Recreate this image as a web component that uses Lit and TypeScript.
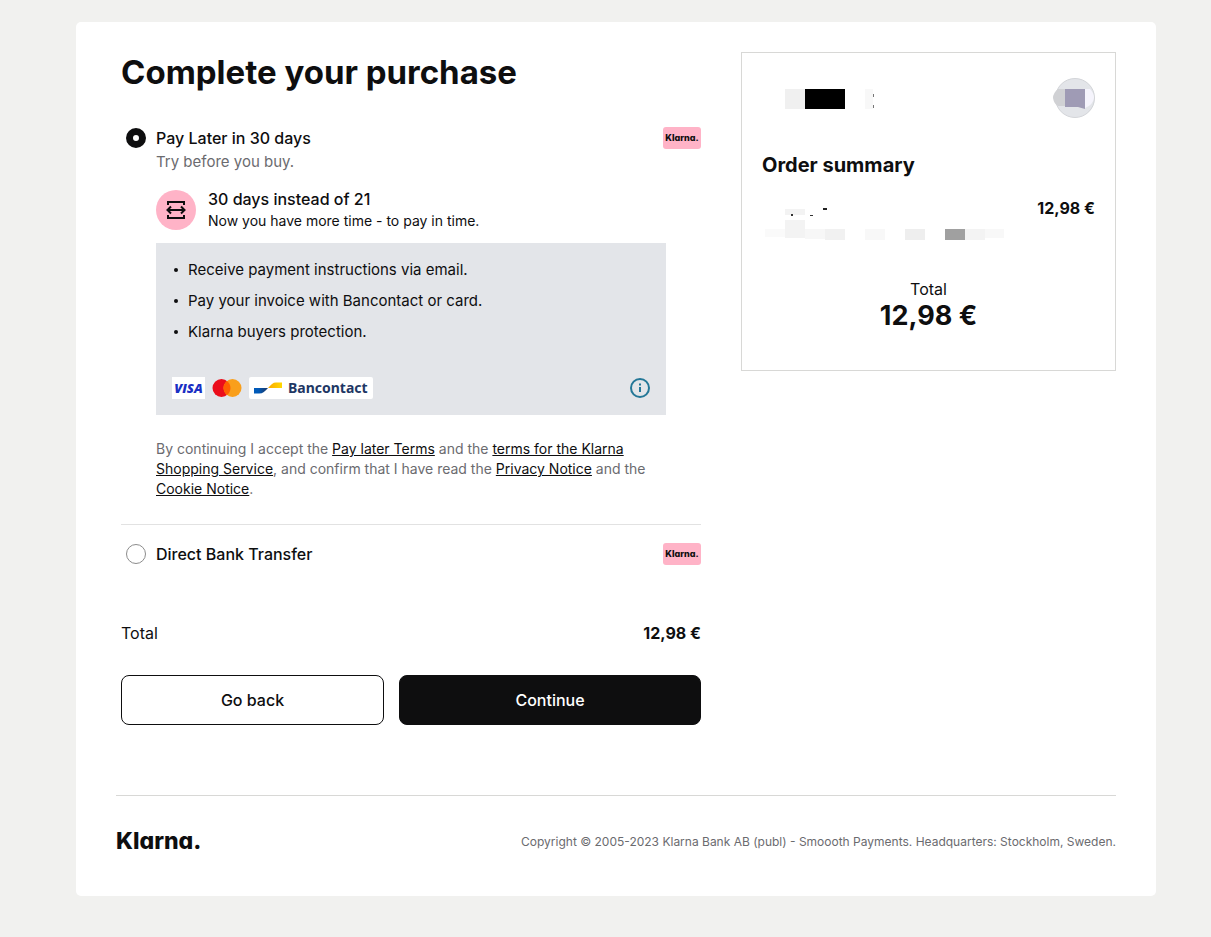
import { LitElement, html, css, svg } from "lit";
import { customElement, property, state } from "lit/decorators.js";

@customElement("klarna-badge")
class KlarnaBadge extends LitElement {
  static styles = css`
    :host {
      display: flex;
      align-items: center;
      justify-content: center;
      width: 38px;
      height: 22px;
      border-radius: 3px;
      background: #ffb3c7;
      color: #0e0e0f;
      font: 800 9px/22px Inter, sans-serif;
      font-feature-settings: "cv11";
    }
  `;
  render() {
    return html`Klarna.`;
  }
}

@customElement("pay-option")
class PayOption extends LitElement {
  @property() label = "";
  @property() value = "";
  @property({ type: Boolean }) selected = false;

  static styles = css`
    :host {
      display: block;
    }
    .row {
      display: flex;
      align-items: center;
      height: 24px;
      padding-left: 5px;
    }
    .radio {
      appearance: none;
      box-sizing: border-box;
      width: 20px;
      height: 20px;
      margin: 0 10px 0 0;
      border: 1px solid #8c8c8c;
      border-radius: 50%;
      background: #fff;
    }
    .radio:checked {
      border: 7px solid #0e0e0f;
    }
    .label {
      flex: 1;
      font-weight: 500;
    }
    .body {
      padding-left: 35px;
    }
  `;

  private pick() {
    this.dispatchEvent(new CustomEvent("pick", { detail: this.value }));
  }

  render() {
    return html`
      <div class="row">
        <input class="radio" type="radio" id="option" name="method" .checked=${this.selected} @change=${this.pick} />
        <label class="label" for="option">${this.label}</label>
        <klarna-badge></klarna-badge>
      </div>
      <div class="body"><slot></slot></div>
    `;
  }
}

const extendIcon = html`
  <svg width="40" height="40" viewBox="0 0 40 40" fill="none" stroke="#0e0e0f" stroke-width="2" aria-hidden="true">
    <path d="M12 15V12H28V15M12 25V28H28V25M11.5 20H28.5M15 16.5L11.5 20L15 23.5M25 16.5L28.5 20L25 23.5" />
  </svg>
`;

const infoIcon = html`
  <svg width="20" height="20" viewBox="0 0 20 20" aria-hidden="true">
    <circle cx="10" cy="10" r="9" fill="none" stroke="#247797" stroke-width="2" />
    <path d="M9 5.5H11V7.5H9ZM9 9H11V14H9Z" fill="#247797" />
  </svg>
`;

const mastercard = html`
  <svg width="30" height="22" viewBox="0 0 30 22" role="img" aria-label="Mastercard">
    <circle cx="9.5" cy="11" r="9" fill="#eb0d1b" />
    <circle cx="20.5" cy="11" r="9" fill="#f99f1b" />
    <path d="M15 3.9a9 9 0 0 1 0 14.2a9 9 0 0 1 0-14.2Z" fill="#ff5f00" />
  </svg>
`;

const bancontactMark = html`
  <svg width="28" height="12" viewBox="0 0 28 12" aria-hidden="true">
    <defs>
      <linearGradient id="blue"><stop offset="0.3" stop-color="#005ab9" /><stop offset="1" stop-color="#1e3764" /></linearGradient>
      <linearGradient id="gold"><stop offset="0" stop-color="#fba900" /><stop offset="1" stop-color="#ffd800" /></linearGradient>
    </defs>
    <path d="M0 6H14C11 9.5 9 11.5 5 11.5H0Z" fill="url(#blue)" />
    <path d="M14 6C17 2.5 19 .5 22 .5H28V6Z" fill="url(#gold)" />
  </svg>
`;

const tiles = (list: [number, number, number, number, string][]) =>
  list.map(([x, y, w, h, fill]) => svg`<rect x=${x} y=${y} width=${w} height=${h} fill=${fill} />`);

const storeName = html`
  <svg width="130" height="40" viewBox="0 0 130 40" aria-hidden="true">
    ${tiles([
      [23, 11, 20, 20, "#f0f0f0"],
      [43, 11, 40, 20, "#000"],
      [103, 11, 8, 20, "#f8f8f8"],
      [111, 16, 1, 3, "#777"],
      [111, 27, 1, 3, "#777"],
    ])}
  </svg>
`;

const storeLogo = html`
  <svg width="42" height="40" viewBox="0 0 42 40" aria-hidden="true">
    <circle cx="22" cy="20" r="19.5" fill="#e3e5e9" stroke="#d2d4d8" />
    <path d="M12 11H5Q0 15 0 20Q1 26 5 28H12Z" fill="#d0d1d4" />
    <path d="M12 11H32V31L25 29H12Z" fill="#9f9bb5" />
    <path d="M32 11H37Q41 15 41 20Q40 27 32 30Z" fill="#f5f4fc" />
  </svg>
`;

const itemName = html`
  <svg width="244" height="46" viewBox="0 0 244 46" aria-hidden="true">
    ${tiles([
      [23, 13, 20, 6, "#f3f3f3"],
      [29, 18, 2, 2, "#333"],
      [48, 19, 3, 1, "#333"],
      [61, 12, 4, 2, "#222"],
      [23, 24, 20, 18, "#f3f3f3"],
      [3, 33, 20, 8, "#fafafa"],
      [43, 33, 20, 10, "#f7f7f7"],
      [63, 33, 20, 11, "#f1f1f1"],
      [103, 33, 20, 11, "#f8f8f8"],
      [143, 33, 20, 11, "#eee"],
      [183, 33, 20, 11, "#a0a0a0"],
      [203, 33, 20, 11, "#f3f3f3"],
      [223, 33, 19, 9, "#f8f8f8"],
    ])}
  </svg>
`;

@customElement("app-root")
class AppRoot extends LitElement {
  @state() private method = "later";

  static styles = css`
    :host {
      display: block;
      box-sizing: border-box;
      min-height: 100vh;
      padding: 22px 55px 41px 76px;
      background: #f1f1ef;
      color: #0e0e0f;
      font: 400 16px/24px Inter, sans-serif;
    }
    svg {
      display: block;
      flex: none;
    }
    .card {
      padding: 30px 40px 42px;
      border-radius: 5px;
      background: #fff;
    }
    .columns {
      display: grid;
      grid-template-columns: minmax(0, 1fr) 375px;
      gap: 40px;
      align-items: start;
    }
    .checkout {
      padding-left: 5px;
    }
    .title {
      margin: 0 0 34px;
      font-size: 33px;
      line-height: 40px;
      font-weight: 700;
    }
    .muted {
      margin: 0;
      color: #6b6b6f;
      font-size: 15px;
    }
    .promo {
      display: flex;
      gap: 12px;
      margin: 13px 0 12px;
    }
    .disc {
      width: 40px;
      height: 40px;
      margin-top: 3px;
      border-radius: 50%;
      background: #ffb3c7;
    }
    .promo-title {
      font-weight: 500;
    }
    .small {
      font-size: 14px;
      line-height: 20px;
    }
    .panel {
      margin-right: 35px;
      padding: 15px 16px 16px;
      background: #e3e5e9;
    }
    .facts {
      display: grid;
      gap: 7px;
      margin: 0 0 33px;
      padding: 0;
      list-style: none;
      font-size: 15px;
    }
    .facts li {
      display: flex;
      align-items: center;
      gap: 10px;
    }
    .facts li::before {
      content: "";
      width: 4px;
      height: 4px;
      margin-left: 2px;
      border-radius: 50%;
      background: #0e0e0f;
    }
    .brands {
      display: flex;
      align-items: center;
      gap: 7px;
    }
    .visa {
      width: 33px;
      background: #fff;
      color: #1a2fc4;
      font: italic 800 13px/22px "Open Sans", sans-serif;
      text-align: center;
    }
    .bancontact {
      display: flex;
      align-items: center;
      gap: 6px;
      padding: 0 5px;
      border-radius: 2px;
      background: #fff;
      color: #1e3764;
      font: 700 14px/22px "Noto Sans", sans-serif;
    }
    .info {
      display: block;
      margin-left: auto;
      padding: 0;
      border: 0;
      background: none;
    }
    .terms {
      margin: 24px 35px 25px 0;
      color: #6b6b6f;
      font-size: 14px;
      line-height: 20px;
    }
    .terms a {
      color: #0e0e0f;
    }
    .second {
      padding-top: 17px;
      border-top: 1px solid #e2e2e2;
    }
    .between {
      display: flex;
      justify-content: space-between;
    }
    .sum {
      margin: 55px 0 30px;
    }
    .strong {
      font-weight: 700;
    }
    .actions {
      display: grid;
      grid-template-columns: 263fr 302fr;
      gap: 15px;
    }
    .button {
      height: 50px;
      border: 1px solid #0e0e0f;
      border-radius: 8px;
      background: #fff;
      color: #0e0e0f;
      font: 500 16px/24px Inter, sans-serif;
    }
    .primary {
      background: #0e0e0f;
      color: #fff;
    }
    .order {
      padding: 25px 20px 39px;
      border: 1px solid #d8d8d6;
    }
    .order-title {
      margin: 33px 0 17px;
      font-size: 20px;
      line-height: 28px;
      font-weight: 700;
    }
    .grand {
      margin-top: 35px;
      text-align: center;
    }
    .amount {
      font-size: 27px;
      line-height: 30px;
      font-weight: 700;
    }
    .footer {
      display: flex;
      align-items: center;
      justify-content: space-between;
      margin-top: 70px;
      padding-top: 33px;
      border-top: 1px solid #d8d8d6;
    }
    .wordmark {
      font-size: 23px;
      line-height: 25px;
      font-weight: 800;
      font-feature-settings: "cv11";
    }
    .copyright {
      color: #6b6b6f;
      font-size: 12px;
      line-height: 20px;
    }
  `;

  private pick(event: CustomEvent<string>) {
    this.method = event.detail;
  }

  render() {
    return html`
      <main class="card">
        <div class="columns">
          <section class="checkout">
            <h1 class="title">Complete your purchase</h1>
            <pay-option label="Pay Later in 30 days" value="later" ?selected=${this.method === "later"} @pick=${this.pick}>
              <p class="muted">Try before you buy.</p>
              <div class="promo">
                <div class="disc">${extendIcon}</div>
                <div>
                  <div class="promo-title">30 days instead of 21</div>
                  <div class="small">Now you have more time - to pay in time.</div>
                </div>
              </div>
              <div class="panel">
                <ul class="facts">
                  <li>Receive payment instructions via email.</li>
                  <li>Pay your invoice with Bancontact or card.</li>
                  <li>Klarna buyers protection.</li>
                </ul>
                <div class="brands">
                  <span class="visa">VISA</span>
                  ${mastercard}
                  <span class="bancontact">${bancontactMark}Bancontact</span>
                  <button class="info" aria-label="More information">${infoIcon}</button>
                </div>
              </div>
              <p class="terms">
                By continuing I accept the <a href="#pay-later">Pay later Terms</a> and the
                <a href="#shopping">terms for the Klarna Shopping Service</a>, and confirm that I have read the
                <a href="#privacy">Privacy Notice</a> and the <a href="#cookies">Cookie Notice</a>.
              </p>
            </pay-option>
            <pay-option class="second" label="Direct Bank Transfer" value="bank" ?selected=${this.method === "bank"} @pick=${this.pick}></pay-option>
            <div class="between sum"><span>Total</span><span class="strong">12,98 €</span></div>
            <div class="actions">
              <button class="button">Go back</button>
              <button class="button primary">Continue</button>
            </div>
          </section>
          <aside class="order">
            <div class="between">${storeName}${storeLogo}</div>
            <h2 class="order-title">Order summary</h2>
            <div class="between">${itemName}<span class="strong">12,98 €</span></div>
            <div class="grand">
              <div>Total</div>
              <div class="amount">12,98 €</div>
            </div>
          </aside>
        </div>
        <footer class="footer">
          <span class="wordmark">Klarna.</span>
          <span class="copyright">Copyright © 2005-2023 Klarna Bank AB (publ) - Smoooth Payments. Headquarters: Stockholm, Sweden.</span>
        </footer>
      </main>
    `;
  }
}
